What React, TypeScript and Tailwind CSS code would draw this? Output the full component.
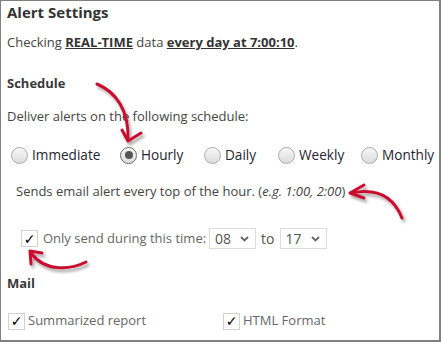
import React from "react";

function Radio({ checked }: { checked?: boolean }) {
  if (checked) {
    return (
      <span className="w-[17px] h-[17px] rounded-full border-[1.5px] border-[#6b6b6b] bg-gradient-to-b from-[#f6f6f6] to-[#dedede] flex items-center justify-center shrink-0">
        <span className="w-[8px] h-[8px] rounded-full bg-[#555]" />
      </span>
    );
  }
  return (
    <span className="w-[17px] h-[17px] rounded-full border border-[#aaaaaa] bg-gradient-to-b from-[#f7f7f7] to-[#dcdcdc] shrink-0" />
  );
}

function Check() {
  return (
    <span className="w-[17px] h-[17px] border border-[#d2d2d2] bg-white flex items-center justify-center shrink-0 text-[14px] leading-none text-black font-['DejaVu_Sans',sans-serif]">
      ✓
    </span>
  );
}

function Chevron() {
  return (
    <svg width="9" height="6" viewBox="0 0 9 6" className="shrink-0">
      <polyline points="1,1 4.5,4.5 8,1" fill="none" stroke="#666" strokeWidth="1.8" />
    </svg>
  );
}

function Select({ value }: { value: string }) {
  return (
    <span className="w-[47px] h-[21px] border border-[#dcdcdc] bg-white flex items-center justify-between pl-[5px] pr-[6px] text-[14px] text-[#555]">
      <span>{value}</span>
      <Chevron />
    </span>
  );
}

export default function App() {
  const radios: { label: string; w: string; checked?: boolean }[] = [
    { label: "Immediate", w: "w-[109px]" },
    { label: "Hourly", w: "w-[84px]", checked: true },
    { label: "Daily", w: "w-[74px]" },
    { label: "Weekly", w: "w-[83px]" },
    { label: "Monthly", w: "w-[76px]" },
  ];
  return (
    <div className="relative w-[441px] h-[342px] bg-white border-t border-l border-r-2 border-b-2 border-[#808080] font-['Open_Sans',sans-serif] pl-[6px] pt-[1px] overflow-hidden">
      <div className="text-[15px] leading-[20px] font-bold text-[#333]">Alert Settings</div>
      <div className="mt-[11px] text-[13px] leading-[18px] text-[#444]">
        Checking <span className="font-bold underline text-[#333]">REAL-TIME</span> data{" "}
        <span className="font-bold underline text-[#333]">every day at 7:00:10</span>.
      </div>
      <div className="mt-[23px] text-[13px] leading-[18px] font-bold text-[#3a3a3a]">Schedule</div>
      <div className="mt-[15px] text-[13px] leading-[18px] text-[#444]">Deliver alerts on the following schedule:</div>
      <div className="mt-[20px] pl-[4px] flex items-center h-[20px]">
        {radios.map((r) => (
          <div key={r.label} className={`${r.w} flex items-center gap-[4px] shrink-0`}>
            <Radio checked={r.checked} />
            <span className="text-[13.6px] leading-[20px] text-[#1f2530]">{r.label}</span>
          </div>
        ))}
      </div>
      <div className="mt-[17px] pl-[9px] text-[13px] leading-[18px] text-[#444]">
        Sends email alert every top of the hour. (<i>e.g. 1:00, 2:00</i>)
      </div>
      <div className="mt-[28px] pl-[14px] flex items-center h-[21px] text-[13px] text-[#666]">
        <Check />
        <span className="ml-[5px]">Only send during this time:</span>
        <span className="ml-[3px]">
          <Select value="08" />
        </span>
        <span className="mx-[5px] text-[14px] text-[#555]">to</span>
        <Select value="17" />
      </div>
      <div className="mt-[25px] text-[13px] leading-[18px] font-bold text-[#3a3a3a]">Mail</div>
      <div className="mt-[20px] pl-[1px] flex items-center h-[18px] text-[13px] text-[#666]">
        <div className="w-[215px] flex items-center gap-[3px]">
          <Check />
          <span>Summarized report</span>
        </div>
        <div className="flex items-center gap-[3px]">
          <Check />
          <span>HTML Format</span>
        </div>
      </div>

      <svg className="absolute left-[-1px] top-[-1px] pointer-events-none" width="441" height="342" viewBox="0 0 441 342">
        <defs>
          <filter id="sh" x="-50%" y="-50%" width="200%" height="200%">
            <feDropShadow dx="2" dy="3" stdDeviation="1.8" floodColor="#000" floodOpacity="0.35" />
          </filter>
        </defs>
        <g fill="none" stroke="#c8102e" strokeWidth="3" strokeLinecap="round" strokeLinejoin="round" filter="url(#sh)">
          <path d="M 97 84 C 116 92, 129 110, 128 140" />
          <path d="M 122 130 L 128 141 L 141 133" />
          <path d="M 402 218 C 395 200, 380 187, 351 193" />
          <path d="M 364 185 L 350 193 L 364 198" />
          <path d="M 86 262 C 70 270, 45 272, 31 253" />
          <path d="M 31 264 L 30 251 L 42 253" />
        </g>
      </svg>
    </div>
  );
}
